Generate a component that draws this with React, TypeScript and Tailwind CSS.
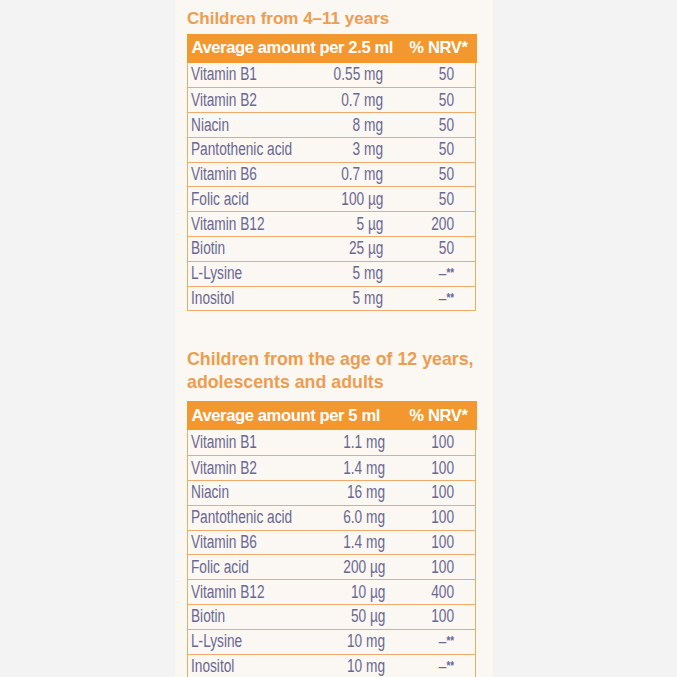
import type { ReactNode } from 'react'

type Row = [string, string, string]

const kids: Row[] = [
  ['Vitamin B1', '0.55 mg', '50'],
  ['Vitamin B2', '0.7 mg', '50'],
  ['Niacin', '8 mg', '50'],
  ['Pantothenic acid', '3 mg', '50'],
  ['Vitamin B6', '0.7 mg', '50'],
  ['Folic acid', '100 µg', '50'],
  ['Vitamin B12', '5 µg', '200'],
  ['Biotin', '25 µg', '50'],
  ['L-Lysine', '5 mg', '–**'],
  ['Inositol', '5 mg', '–**'],
]

const adults: Row[] = [
  ['Vitamin B1', '1.1 mg', '100'],
  ['Vitamin B2', '1.4 mg', '100'],
  ['Niacin', '16 mg', '100'],
  ['Pantothenic acid', '6.0 mg', '100'],
  ['Vitamin B6', '1.4 mg', '100'],
  ['Folic acid', '200 µg', '100'],
  ['Vitamin B12', '10 µg', '400'],
  ['Biotin', '50 µg', '100'],
  ['L-Lysine', '10 mg', '–**'],
  ['Inositol', '10 mg', '–**'],
]

export default function App() {
  return (
    <div className="w-[677px] h-[677px] overflow-hidden bg-[#f3f3f3] flex font-['Liberation_Sans',Arial,sans-serif]">
      <div className="ml-[175px] w-[318px] h-full bg-[#fbf7f3] pl-[12px] pr-[17px] pt-[8px]">
        <Title className="text-[17px]">Children from 4–11 years</Title>
        <NutrientTable className="mt-[3px]" per="2.5 ml" rows={kids} amountWidth="w-[195px]" />
        <Title className="mt-[37px] text-[17.8px]">
          Children from the age of 12 years,
          <br />
          adolescents and adults
        </Title>
        <NutrientTable className="mt-[8px]" per="5 ml" rows={adults} amountWidth="w-[197px]" />
      </div>
    </div>
  )
}

function Title({ children, className = '' }: { children: ReactNode; className?: string }) {
  return (
    <h2 className={`font-bold leading-[22.5px] text-[#ec9d50] ${className}`}>{children}</h2>
  )
}

// the print uses a condensed face; squeeze Liberation Sans horizontally
function Narrow({ children, right = false }: { children: ReactNode; right?: boolean }) {
  return (
    <span className={`inline-block scale-x-[0.76] ${right ? 'origin-right' : 'origin-left'}`}>
      {children}
    </span>
  )
}

function NutrientTable({
  per,
  rows,
  amountWidth,
  className = '',
}: {
  per: string
  rows: Row[]
  amountWidth: string
  className?: string
}) {
  return (
    <div className={`w-[289px] border-x-[1.5px] border-b-[1.5px] border-[#f0aa6c] ${className}`}>
      <div className="h-[29px] -mx-[1.5px] bg-[#f3972f] flex items-center justify-between pl-[5px] pr-[9px] text-white font-bold text-[16.6px] tracking-[-0.4px]">
        <span>Average amount per {per}</span>
        <span>% NRV*</span>
      </div>
      {rows.map(([name, amount, nrv], i) => (
        <div
          key={name}
          className={`h-[24.8px] flex items-center text-[18px] text-[#6a6891] ${
            i > 0 ? 'border-t-[1.5px] border-[#f0aa6c]' : ''
          }`}
        >
          <div className={`${amountWidth} flex justify-between pl-[3px]`}>
            <Narrow>{name}</Narrow>
            <Narrow right>{amount}</Narrow>
          </div>
          <div className="flex-1 text-right pr-[21px]">
            <Narrow right>
              {nrv.startsWith('–') ? (
                <>
                  –<sup className="text-[13px] font-bold relative -top-[2px]">**</sup>
                </>
              ) : (
                nrv
              )}
            </Narrow>
          </div>
        </div>
      ))}
    </div>
  )
}
